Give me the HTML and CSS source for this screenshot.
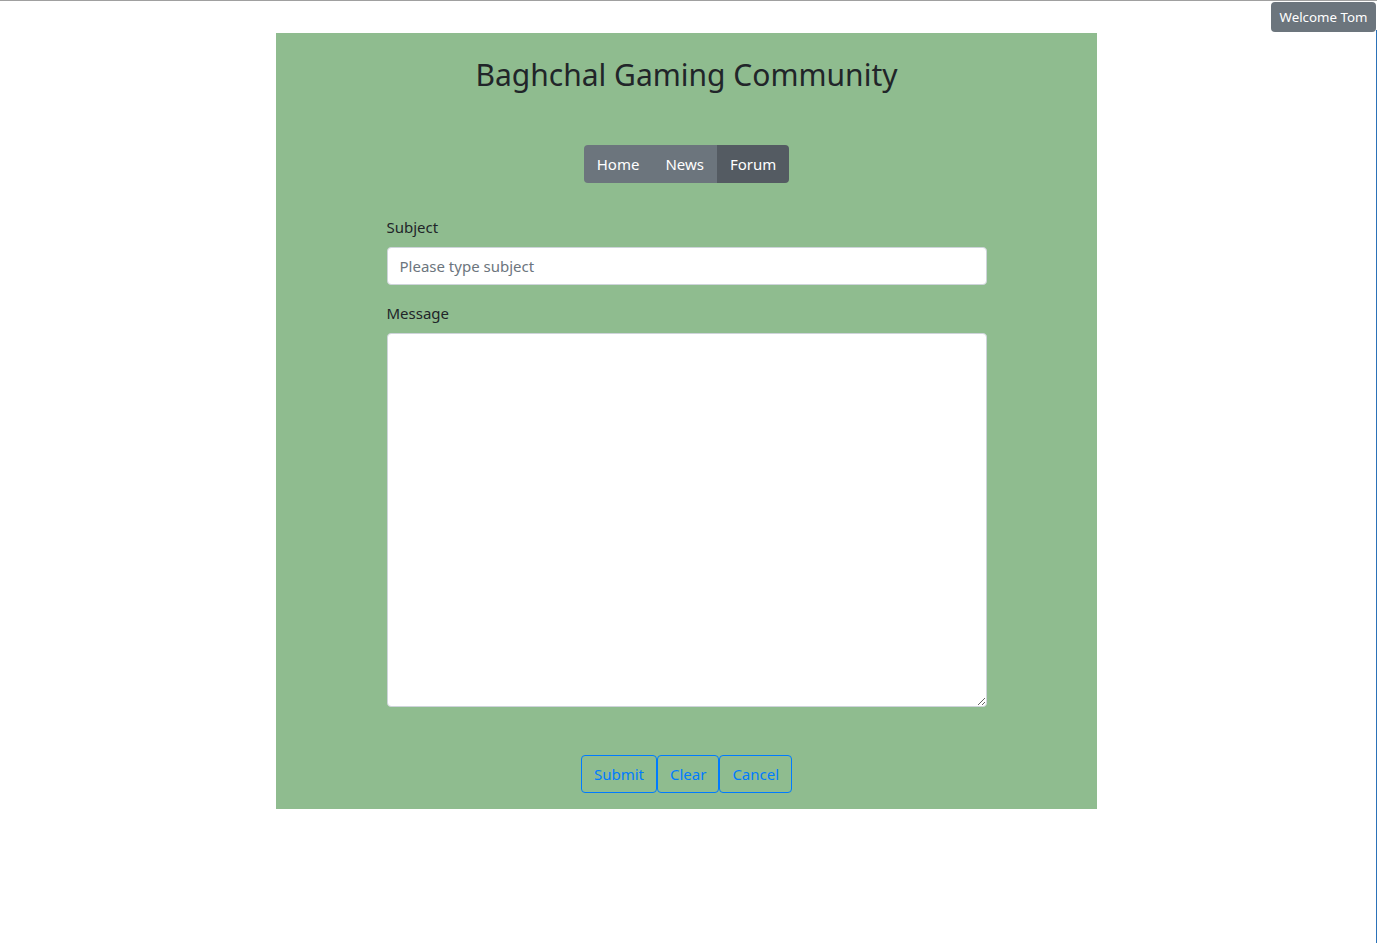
FILE: index.html
```html
<!DOCTYPE html>
<html>
<head>
<meta charset="utf-8">
<link rel="stylesheet" href="styles.css">
</head>
<body>
<div class="topline"></div>
<div class="rightline"></div>
<div class="welcome">Welcome Tom</div>
<main class="panel">
  <h2 class="title">Baghchal Gaming Community</h2>
  <nav class="navgroup">
    <a class="navbtn">Home</a><a class="navbtn">News</a><a class="navbtn active">Forum</a>
  </nav>
  <form class="form">
    <label class="label">Subject</label>
    <input class="input" type="text" placeholder="Please type subject">
    <label class="label">Message</label>
    <textarea class="textarea"></textarea>
    <div class="actions">
      <button type="button" class="obtn">Submit</button><button type="button" class="obtn">Clear</button><button type="button" class="obtn">Cancel</button>
    </div>
  </form>
</main>
</body>
</html>
```
FILE: styles.css
```css
html, body { margin: 0; padding: 0; background: #fff; }
body {
  font-family: "Segoe UI", "Noto Sans", "Open Sans", sans-serif;
  color: #212529;
  font-size: 15px;
  padding-top: 33px;
}
.topline {
  position: fixed; top: 0; left: 0; right: 0; height: 1px; background: #a0a0a0;
}
.rightline {
  position: fixed; top: 30px; bottom: 0; right: 0; width: 1px; background: #2c72b8;
}
.welcome {
  position: absolute; top: 2px; right: 1px;
  width: 105px; height: 30px; box-sizing: border-box;
  background: #6c757d; color: #fff; border-radius: 4px;
  font-size: 13.3px; line-height: 31px; text-align: center;
}
.panel {
  width: 821px; margin: 0 auto 0 276px;
  background: #8fbc8f;
  display: flex; flex-direction: column; align-items: center;
  padding: 20px 0 16px;
  box-sizing: border-box;
}
.title {
  margin: 0; font-size: 30px; font-weight: 400; line-height: 44px; color: #212529;
}
.navgroup {
  display: flex; margin-top: 48px; border-radius: 4px; overflow: hidden;
}
.navbtn {
  background: #6c757d; color: #fff; padding: 0 13px; height: 38px; line-height: 38px; font-size: 15px;
}
.navbtn.active { background: #545b62; }
.form {
  width: 600px; display: flex; flex-direction: column; margin-top: 32px;
}
.label { font-size: 15px; line-height: 24px; margin-bottom: 8px; }
.input {
  height: 38px; box-sizing: border-box; border: 1px solid #ced4da; border-radius: 4px;
  padding: 0 12px; font: inherit; font-size: 15px; margin-bottom: 16px; color: #495057;
}
.input::placeholder { color: #6c757d; }
.textarea {
  height: 374px; box-sizing: border-box; border: 1px solid #ced4da; border-radius: 4px;
  padding: 6px 12px; font: inherit; resize: vertical; margin: 0;
}
.actions { display: flex; justify-content: center; margin-top: 48px; }
.obtn {
  background: transparent; border: 1px solid #007bff; color: #007bff; border-radius: 4px;
  font: inherit; font-size: 15px; height: 38px; padding: 0 12px; margin: 0;
}
```
